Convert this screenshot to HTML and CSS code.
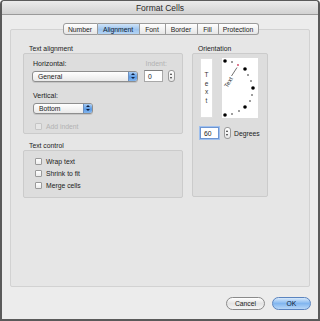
FILE: index.html
```html
<!DOCTYPE html>
<html lang="en">
<head>
  <meta charset="UTF-8">
  <title>Format Cells</title>
  <link rel="stylesheet" href="styles.css">
</head>
<body>
<div class="window">
  <div class="titlebar">Format Cells</div>

  <div class="tabs">
    <span class="tab t-number">Number</span>
    <span class="tab t-align active">Alignment</span>
    <span class="tab t-font">Font</span>
    <span class="tab t-border">Border</span>
    <span class="tab t-fill">Fill</span>
    <span class="tab t-prot">Protection</span>
  </div>

  <div class="panel">
    <div class="col-left">
      <div class="group-label">Text alignment</div>
      <div class="group align-group">
        <div class="row-labels">
          <span>Horizontal:</span>
          <span class="dim indent-label">Indent:</span>
        </div>
        <div class="row">
          <div class="popup wide"><span>General</span><i class="arrows"></i></div>
          <div class="field">0</div>
          <div class="stepper"></div>
        </div>
        <div class="row-labels second">
          <span>Vertical:</span>
        </div>
        <div class="row">
          <div class="popup short"><span>Bottom</span><i class="arrows"></i></div>
        </div>
        <label class="check dim first"><span class="box"></span>Add indent</label>
      </div>

      <div class="group-label">Text control</div>
      <div class="group control-group">
        <label class="check"><span class="box"></span>Wrap text</label>
        <label class="check"><span class="box"></span>Shrink to fit</label>
        <label class="check"><span class="box"></span>Merge cells</label>
      </div>
    </div>

    <div class="col-right">
      <div class="group-label">Orientation</div>
      <div class="group orient-group">
        <div class="orient-boxes">
          <div class="vtext">
            <span>T</span><span>e</span><span>x</span><span>t</span>
          </div>
          <div class="dial">
            <svg width="36" height="60" viewBox="0 0 36 60">
              <circle cx="3" cy="3" r="1.8" fill="#000"/>
              <circle cx="10" cy="4" r="0.8" fill="#222"/>
              <circle cx="16" cy="7" r="0.9" fill="#d04060"/>
              <circle cx="23" cy="11" r="1.8" fill="#000"/>
              <circle cx="26" cy="17" r="0.8" fill="#222"/>
              <circle cx="29" cy="23" r="0.8" fill="#222"/>
              <circle cx="31" cy="30" r="1.8" fill="#000"/>
              <circle cx="30" cy="37" r="0.8" fill="#222"/>
              <circle cx="28" cy="43" r="0.8" fill="#222"/>
              <circle cx="23" cy="49" r="1.8" fill="#000"/>
              <circle cx="17" cy="53" r="0.8" fill="#222"/>
              <circle cx="10" cy="56" r="0.8" fill="#222"/>
              <circle cx="3" cy="57" r="1.8" fill="#000"/>
              <line x1="9.5" y1="18" x2="15" y2="9.5" stroke="#333" stroke-width="0.7"/>
              <text x="0" y="0" font-family="Liberation Sans, sans-serif" font-size="6" fill="#333" transform="translate(5.5 30) rotate(-60)">Text</text>
            </svg>
          </div>
        </div>
        <div class="degrees">
          <div class="field focus">60</div>
          <div class="stepper"></div>
          <span>Degrees</span>
        </div>
      </div>
    </div>
  </div>

  <div class="buttons">
    <button class="btn">Cancel</button>
    <button class="btn default">OK</button>
  </div>
</div>
</body>
</html>
```

FILE: styles.css
```css
* { margin: 0; padding: 0; box-sizing: border-box; }
html, body { width: 320px; height: 321px; overflow: hidden; }
body {
  font-family: 'Liberation Sans', Arial, sans-serif;
  font-size: 7px;
  color: #222;
  background: #fff;
}
.window {
  width: 320px;
  height: 321px;
  border: 1px solid #5a5a5a;
  border-left-width: 2px;
  border-right-width: 2px;
  border-bottom-width: 2px;
  border-radius: 4px 4px 0 0;
  background: #ececec;
  display: flex;
  flex-direction: column;
}
.titlebar {
  height: 14px;
  line-height: 14px;
  text-align: center;
  font-size: 8.5px;
  color: #2a2a2a;
  background: linear-gradient(#ebebeb, #d2d2d2);
  border-bottom: 1px solid #9a9a9a;
  border-radius: 3px 3px 0 0;
}

.tabs {
  display: flex;
  justify-content: center;
  margin-top: 8px;
  margin-left: 1px;
  position: relative;
  z-index: 1;
}
.tab {
  height: 12px;
  line-height: 11px;
  text-align: center;
  font-size: 6.8px;
  background: linear-gradient(#ffffff, #e6e6e6);
  border: 1px solid #9b9b9b;
  border-left: none;
}
.tab:first-child { border-left: 1px solid #9b9b9b; border-radius: 3px 0 0 3px; }
.tab:last-child { border-radius: 0 3px 3px 0; }
.t-number { width: 35px; }
.t-align { width: 42px; }
.t-font { width: 26px; }
.t-border { width: 32px; }
.t-fill { width: 21px; }
.t-prot { width: 40px; }
.tab.active {
  background: linear-gradient(#cfe3f8, #9cc4ee 55%, #b5d4f4);
  color: #0c1a33;
}

.panel {
  margin: -6px 8px 0 8px;
  height: 258px;
  background: #e6e6e6;
  border: 1px solid #d2d2d2;
  border-radius: 2px;
  display: flex;
  gap: 9px;
  padding: 15px 0 0 12px;
}
.group-label {
  height: 8px;
  line-height: 8px;
  padding-left: 6px;
  font-size: 6.8px;
}
.group {
  background: #dddddd;
  border: 1px solid #cbcbcb;
  border-radius: 2px;
}
.col-left { width: 160px; }
.col-right { width: 76px; }

.align-group {
  height: 81px;
  padding: 6px 0 0 9px;
  margin-bottom: 8px;
}
.row-labels { display: flex; height: 8px; line-height: 8px; }
.row-labels.second { margin-top: 10px; }
.indent-label { margin-left: 79px; }
.dim { color: #b2b2b2; }
.row {
  display: flex;
  align-items: center;
  margin-top: 2px;
  height: 12px;
}
.popup {
  height: 11px;
  border: 1px solid #8e8e8e;
  border-radius: 3px;
  background: linear-gradient(#ffffff, #e9e9e9);
  display: flex;
  align-items: center;
  justify-content: space-between;
  padding-left: 5px;
  box-shadow: 0 1px 0 #c5c5c5;
  overflow: hidden;
  font-size: 6.8px;
}
.popup.wide { width: 106px; margin-left: -1px; }
.popup.short { width: 60px; }
.arrows {
  width: 9px;
  height: 11px;
  background: linear-gradient(#b8d6f6, #5b9be5 55%, #8dbcf0);
  border-left: 1px solid #6b8fbf;
  position: relative;
}
.arrows::before, .arrows::after {
  content: "";
  position: absolute;
  left: 2px;
  border-left: 2px solid transparent;
  border-right: 2px solid transparent;
}
.arrows::before { top: 2px; border-bottom: 2px solid #102040; }
.arrows::after { top: 6px; border-top: 2px solid #102040; }

.field {
  width: 19px;
  height: 12px;
  line-height: 11px;
  padding-left: 3px;
  background: #fff;
  border: 1px solid #a8a8a8;
  border-top-color: #7f7f7f;
  font-size: 6.8px;
  margin-left: 6px;
}
.field.focus {
  margin-left: 0;
  border: 1px solid #6d95d2;
  box-shadow: 0 0 0 1px #9fc0ee;
}
.stepper {
  width: 7px;
  height: 12px;
  margin-left: 5px;
  border: 1px solid #9a9a9a;
  border-radius: 3px;
  background: linear-gradient(#fff, #e8e8e8);
  position: relative;
}
.stepper::before, .stepper::after {
  content: "";
  position: absolute;
  left: 1px;
  border-left: 1.5px solid transparent;
  border-right: 1.5px solid transparent;
}
.stepper::before { top: 2px; border-bottom: 2px solid #333; }
.stepper::after { top: 6px; border-top: 2px solid #333; }

.check {
  display: flex;
  align-items: center;
  height: 12px;
  font-size: 6.8px;
  padding-left: 2px;
}
.check.first { margin-top: 6px; }
.box {
  width: 7px;
  height: 7px;
  margin-right: 4px;
  background: linear-gradient(#ffffff, #ececec);
  border: 1px solid #9a9a9a;
  border-radius: 1px;
}
.check.dim .box { border-color: #c5c5c5; background: #e6e6e6; }
.control-group {
  height: 48px;
  padding: 4px 0 0 9px;
}

.orient-group {
  height: 144px;
  padding: 4px 0 0 7px;
}
.orient-boxes { display: flex; gap: 9px; }
.vtext {
  width: 13px;
  height: 60px;
  background: #fff;
  border: 1px solid #e0e0e0;
  display: flex;
  flex-direction: column;
  align-items: center;
  justify-content: center;
  font-size: 6.5px;
  line-height: 8.5px;
  color: #333;
}
.dial {
  width: 36px;
  height: 60px;
  background: #fff;
}
.dial svg { display: block; }
.degrees {
  display: flex;
  align-items: center;
  margin-top: 9px;
  height: 12px;
}
.degrees span { margin-left: 3px; font-size: 6.8px; }

.buttons {
  display: flex;
  justify-content: flex-end;
  gap: 7px;
  padding: 10px 7px 0 0;
}
.btn {
  width: 39px;
  height: 13px;
  font-family: inherit;
  font-size: 6.8px;
  color: #222;
  border: 1px solid #8a8a8a;
  border-radius: 7px;
  background: linear-gradient(#ffffff, #e3e3e3 50%, #f4f4f4);
}
.btn.default {
  border-color: #5b84bf;
  background: linear-gradient(#d7e9fb, #82b6ef 50%, #b8d7f7);
  color: #0c1a33;
}
```
